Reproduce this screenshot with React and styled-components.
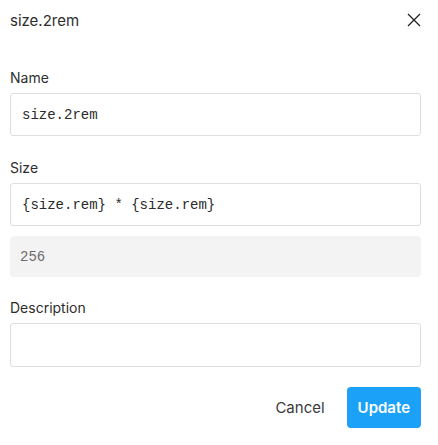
import styled, { createGlobalStyle } from "styled-components";

const GlobalStyle = createGlobalStyle`
    html, body {
        margin: 0;
        padding: 0;
        background: #ffffff;
        font-family: Inter, "Noto Sans", sans-serif;
        color: #2e2e2e;
    }
`

const Dialog = styled.div`
    width: 438px;
    box-sizing: border-box;
    padding: 0 17px 0 10px;
    display: flex;
    flex-direction: column;
`

const Header = styled.div`
    height: 40px;
    display: flex;
    align-items: center;
    justify-content: space-between;
`

const Title = styled.h2`
    margin: 0;
    font-size: 15px;
    font-weight: 400;
    color: #2e2e2e;
`

const CloseButton = styled.button`
    border: none;
    background: none;
    padding: 0;
    width: 16px;
    height: 16px;
    margin-right: -1px;
    display: flex;
    align-items: center;
    justify-content: center;
    cursor: pointer;
    color: #222;
`

const Field = styled.div`
    display: flex;
    flex-direction: column;
    margin-top: ${props => props.top || 22}px;
`

const Label = styled.label`
    font-size: 14px;
    line-height: 20px;
    margin-bottom: 5px;
    color: #2e2e2e;
`

const Input = styled.div`
    box-sizing: border-box;
    height: ${props => props.height || 43}px;
    border: 1px solid #dedede;
    border-radius: 3px;
    padding: 0 11px;
    display: flex;
    align-items: center;
    font-family: "Liberation Mono", "DejaVu Sans Mono", monospace;
    font-size: 14px;
    color: #2a2a2a;
`

const Resolved = styled.div`
    box-sizing: border-box;
    height: 41px;
    margin-top: 10px;
    background: #f3f3f3;
    border-radius: 4px;
    padding: 0 10px;
    display: flex;
    align-items: center;
    font-family: "Liberation Mono", "DejaVu Sans Mono", monospace;
    font-size: 14px;
    color: #6b6b6b;
`

const Footer = styled.div`
    display: flex;
    justify-content: flex-end;
    align-items: center;
    gap: 22px;
    margin-top: 20px;
`

const Button = styled.button`
    font-family: Inter, sans-serif;
    font-size: 15px;
    height: 41px;
    border: none;
    border-radius: 4px;
    padding: 0 ${props => (props.primary ? '11px' : '0')};
    background: ${props => (props.primary ? '#1ca1f8' : 'transparent')};
    color: ${props => (props.primary ? '#ffffff' : '#3a3a3a')};
    font-weight: ${props => (props.primary ? 600 : 400)};
    cursor: pointer;
`

const CloseIcon = () => (
    <svg width="14" height="14" viewBox="0 0 14 14" fill="none">
        <path d="M1 1L13 13M13 1L1 13" stroke="currentColor" strokeWidth="1.3" />
    </svg>
)

export default function App() {
    return (
        <>
            <GlobalStyle />
            <Dialog>
                <Header>
                    <Title>size.2rem</Title>
                    <CloseButton><CloseIcon /></CloseButton>
                </Header>
                <Field top={28}>
                    <Label>Name</Label>
                    <Input>size.2rem</Input>
                </Field>
                <Field>
                    <Label>Size</Label>
                    <Input>{"{size.rem} * {size.rem}"}</Input>
                    <Resolved>256</Resolved>
                </Field>
                <Field top={21}>
                    <Label>Description</Label>
                    <Input height={44} />
                </Field>
                <Footer>
                    <Button>Cancel</Button>
                    <Button primary>Update</Button>
                </Footer>
            </Dialog>
        </>
    );
}
